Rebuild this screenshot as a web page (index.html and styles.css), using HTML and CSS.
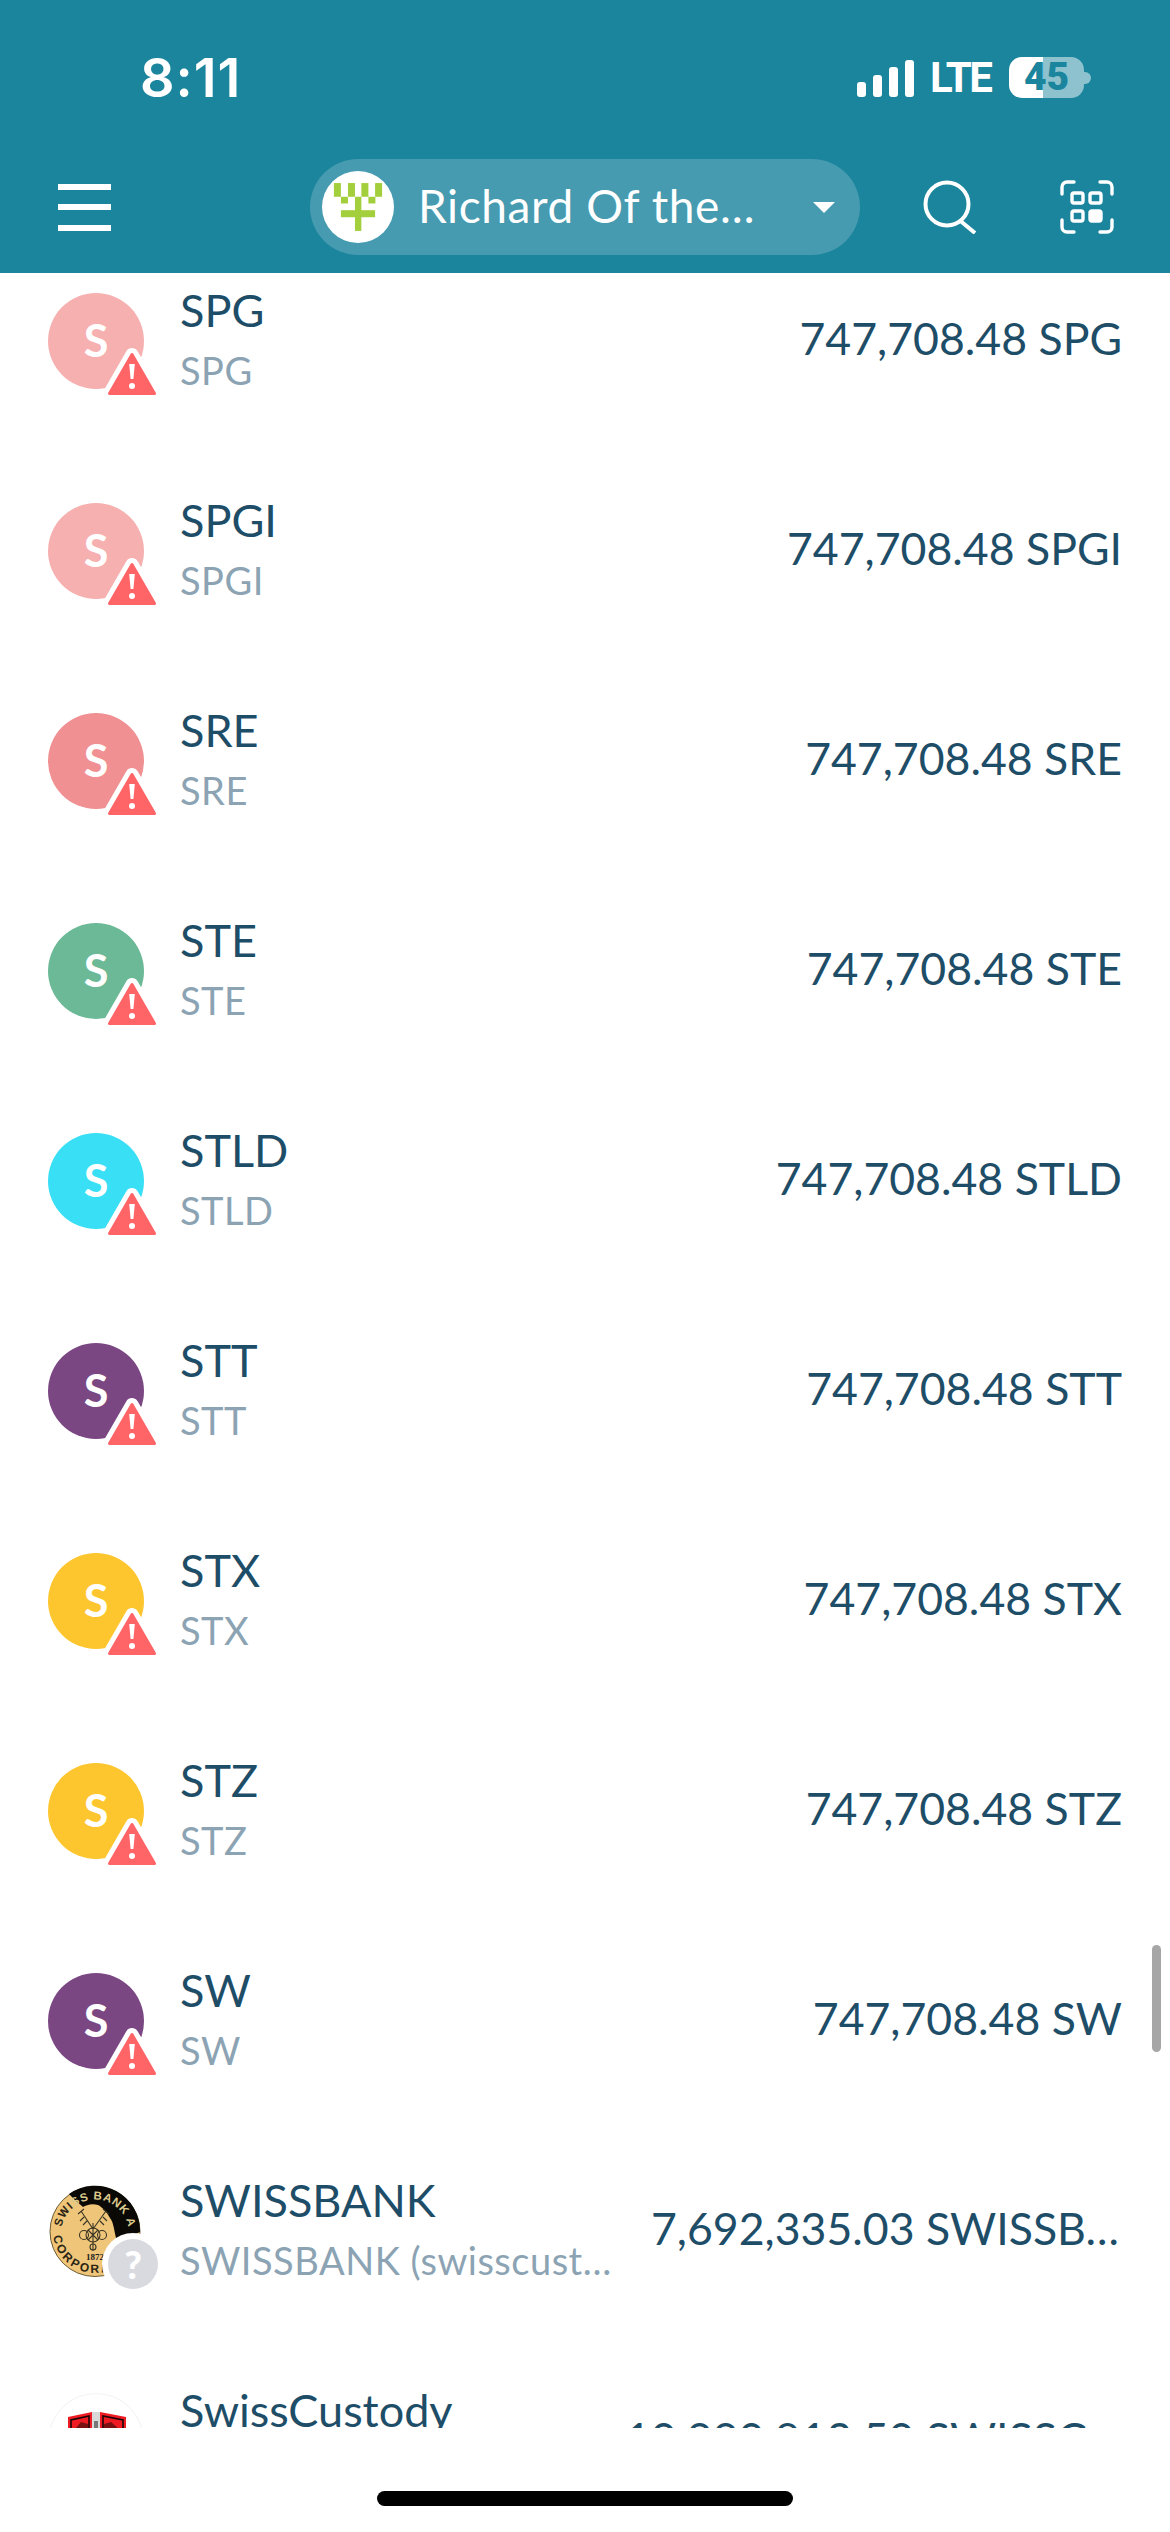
FILE: index.html
```html
<!DOCTYPE html>
<html lang="en">
<head>
<meta charset="utf-8">
<title>Tokens</title>
<link rel="stylesheet" href="styles.css">
</head>
<body>
<div class="app">
  <header class="header">
    <div class="status">
      <span class="time">8:11</span>
      <div class="status-right">
        <div class="signal"><i class="b1"></i><i class="b2"></i><i class="b3"></i><i class="b4"></i></div>
        <span class="lte">LTE</span>
        <div class="battery"><span class="batt-num">45</span></div>
        <span class="batt-tip"></span>
      </div>
    </div>
    <nav class="nav">
      <div class="burger"><i></i><i></i><i></i></div>
      <div class="pill">
        <div class="pill-logo">
          <svg viewBox="37 33 214 215" width="72" height="72"><g fill="#a4cf3d"><rect x="72" y="69" width="21" height="41"/><rect x="114" y="69" width="21" height="41"/><rect x="154" y="69" width="21" height="41"/><rect x="195" y="69" width="21" height="41"/><rect x="93" y="110" width="21" height="20"/><rect x="175" y="110" width="21" height="20"/><rect x="135" y="110" width="19" height="102"/><rect x="93" y="150" width="102" height="21"/></g></svg>
        </div>
        <span class="pill-text">Richard Of the…</span>
        <svg class="caret" viewBox="0 0 22 11" width="22" height="11"><path d="M0 0H22L11 11Z" fill="#fff"/></svg>
      </div>
      <svg class="search" viewBox="0 0 54 54" width="54" height="54" fill="none" stroke="#fff" stroke-width="4"><circle cx="24" cy="24" r="21.5"/><path d="M37.5 41L52 53"/></svg>
      <svg class="scan" viewBox="0 0 54 54" width="54" height="54" fill="none" stroke="#fff" stroke-width="3.4" stroke-linecap="round"><path d="M2 14V7A5 5 0 0 1 7 2H14M40 2H47A5 5 0 0 1 52 7V14M2 40V47A5 5 0 0 0 7 52H14M40 52H47A5 5 0 0 0 52 47V40"/><rect x="12" y="13" width="11" height="10" rx="2"/><rect x="30" y="13" width="11" height="10" rx="2"/><rect x="12" y="31" width="11" height="10" rx="2"/><rect x="30" y="31" width="11" height="10" rx="2" fill="#fff"/></svg>
    </nav>
  </header>

  <main class="list">
    <div class="list-inner">
      <div class="row"><div class="avatar c-pink">S<svg class="warn" viewBox="0 0 60 56" width="60" height="56"><use href="#warn-icon"/></svg></div><div class="names"><div class="name">SPG</div><div class="sub">SPG</div></div><div class="amount">747,708.48 SPG</div></div>
      <div class="row"><div class="avatar c-pink">S<svg class="warn" viewBox="0 0 60 56" width="60" height="56"><use href="#warn-icon"/></svg></div><div class="names"><div class="name">SPGI</div><div class="sub">SPGI</div></div><div class="amount">747,708.48 SPGI</div></div>
      <div class="row"><div class="avatar c-rose">S<svg class="warn" viewBox="0 0 60 56" width="60" height="56"><use href="#warn-icon"/></svg></div><div class="names"><div class="name">SRE</div><div class="sub">SRE</div></div><div class="amount">747,708.48 SRE</div></div>
      <div class="row"><div class="avatar c-green">S<svg class="warn" viewBox="0 0 60 56" width="60" height="56"><use href="#warn-icon"/></svg></div><div class="names"><div class="name">STE</div><div class="sub">STE</div></div><div class="amount">747,708.48 STE</div></div>
      <div class="row"><div class="avatar c-cyan">S<svg class="warn" viewBox="0 0 60 56" width="60" height="56"><use href="#warn-icon"/></svg></div><div class="names"><div class="name">STLD</div><div class="sub">STLD</div></div><div class="amount">747,708.48 STLD</div></div>
      <div class="row"><div class="avatar c-purple">S<svg class="warn" viewBox="0 0 60 56" width="60" height="56"><use href="#warn-icon"/></svg></div><div class="names"><div class="name">STT</div><div class="sub">STT</div></div><div class="amount">747,708.48 STT</div></div>
      <div class="row"><div class="avatar c-yellow">S<svg class="warn" viewBox="0 0 60 56" width="60" height="56"><use href="#warn-icon"/></svg></div><div class="names"><div class="name">STX</div><div class="sub">STX</div></div><div class="amount">747,708.48 STX</div></div>
      <div class="row"><div class="avatar c-yellow">S<svg class="warn" viewBox="0 0 60 56" width="60" height="56"><use href="#warn-icon"/></svg></div><div class="names"><div class="name">STZ</div><div class="sub">STZ</div></div><div class="amount">747,708.48 STZ</div></div>
      <div class="row"><div class="avatar c-purple">S<svg class="warn" viewBox="0 0 60 56" width="60" height="56"><use href="#warn-icon"/></svg></div><div class="names"><div class="name">SW</div><div class="sub">SW</div></div><div class="amount">747,708.48 SW</div></div>

      <div class="row">
        <div class="avatar">
          <svg class="seal" viewBox="0 0 96 96" width="96" height="96">
            <defs>
              <path id="arc-top" d="M15 62A34 34 0 1 1 79 62"/>
              <path id="arc-bot" d="M5 48A42 42 0 0 0 89 48"/>
            </defs>
            <circle cx="47" cy="48.5" r="45" fill="#efc679" stroke="#6b5a32" stroke-width="1"/>
            <path d="M21 11A45 45 0 0 1 92 49L69 59C66 48 66 40 62 35C58 28 54 24 50 22C44 20 38 22 35 24L27 17Z" fill="#0b0905"/>
            <text class="seal-text top"><textPath href="#arc-top" startOffset="14%"><tspan class="seal-dark">SWI</tspan>SS BANK A</textPath></text>
            <text class="seal-text bot"><textPath href="#arc-bot" startOffset="4%">CORPORATION</textPath></text>
            <g fill="none" stroke="#3a3524" stroke-width="1.1"><circle cx="45" cy="52" r="7"/><circle cx="36" cy="52" r="4.5"/><circle cx="54" cy="52" r="4.5"/><circle cx="45" cy="64" r="3"/><path d="M33 28L45 46M58 28L45 46M45 40V68M30 31L36 26M61 31L55 26M36 34L32 38M55 34L59 38M39 38L35 42M52 38L56 42M40 57L50 47M40 47L50 57"/></g>
            <text class="seal-year" x="47" y="77">1872</text>
          </svg>
          <svg class="unknown" viewBox="0 0 62 62" width="62" height="62"><circle cx="31" cy="31" r="31" fill="#fff"/><circle cx="31" cy="31" r="25" fill="#d9dae0"/></svg>
          <span class="unknown-mark">?</span>
        </div>
        <div class="names"><div class="name">SWISSBANK</div><div class="sub">SWISSBANK (swisscustody.ch)</div></div>
        <div class="amount">7,692,335.03 SWISSBANK</div>
      </div>

      <div class="row">
        <div class="avatar">
          <svg class="shield" viewBox="0 0 96 96" width="96" height="96">
            <circle cx="48" cy="48" r="47.5" fill="#fff" stroke="#f2f2f2"/>
            <path d="M20 24L44 19V84C30 80 20 66 20 50Z" fill="#ee1c22"/>
            <path d="M78 24L52 19V84C66 80 78 66 78 50Z" fill="#ee1c22"/>
            <rect x="44" y="19" width="8" height="70" fill="#d9d9d9"/>
            <path d="M23 50V27L41 23V70M75 50V27L55 23V70" fill="none" stroke="#1a0506" stroke-width="1.6"/>
            <path d="M27 36L33 29L40 31V50H27ZM56 31L63 29L71 36V50H56Z" fill="#7a1012"/>
            <path d="M46 28H50V40H46Z" fill="#777"/>
          </svg>
        </div>
        <div class="names names-short"><div class="name">SwissCustody</div><div class="sub">SwissCustody</div></div>
        <div class="amount">10,990,813.50 SWISSCUSTODY</div>
      </div>
    </div>
    <div class="scrollbar"></div>
  </main>

  <footer class="home"><span class="home-bar"></span></footer>
</div>

<svg class="defs" width="0" height="0">
  <symbol id="warn-icon" viewBox="0 0 60 56">
    <path d="M30 9.5L7.5 48.5H52.5Z" fill="#fff" stroke="#fff" stroke-width="13" stroke-linejoin="round"/>
    <path d="M30 9.5L7.5 48.5H52.5Z" fill="#ff6467" stroke="#ff6467" stroke-width="3" stroke-linejoin="round"/>
    <path d="M27.2 19H32.8L31.4 34H28.6Z" fill="#fff"/>
    <circle cx="30" cy="41" r="3" fill="#fff"/>
  </symbol>
</svg>
</body>
</html>
```

FILE: styles.css
```css
* { box-sizing: border-box; }
html, body { margin: 0; padding: 0; background: #fff; }
.app {
  width: 1170px;
  height: 2532px;
  display: flex;
  flex-direction: column;
  overflow: hidden;
  font-family: "Lato", "Noto Sans", sans-serif;
}

/* Header */
.header {
  height: 273px;
  flex: none;
  background: #1a859c;
  padding-top: 57px;
  color: #fff;
}
.status {
  height: 41px;
  display: flex;
  align-items: center;
  justify-content: space-between;
  padding: 0 79px 0 140px;
}
.time {
  font-family: "Inter", sans-serif;
  font-weight: 600;
  font-size: 54px;
  line-height: 41px;
  letter-spacing: 1px;
}
.status-right { display: flex; align-items: center; height: 41px; }
.signal { display: flex; align-items: flex-end; gap: 6.5px; height: 37px; margin-top: 1px; }
.signal i { display: block; width: 9.5px; background: #fff; border-radius: 3px; }
.signal .b1 { height: 15px; }
.signal .b2 { height: 22px; }
.signal .b3 { height: 30px; }
.signal .b4 { height: 37px; }
.lte {
  font-family: "Roboto", sans-serif;
  font-weight: 700;
  font-size: 42px;
  line-height: 41px;
  margin-left: 16px;
  width: 63px;
  display: block;
  letter-spacing: -2.4px;
  margin-right: 16px;
}
.battery {
  width: 75px;
  height: 41px;
  border-radius: 13px;
  background: linear-gradient(90deg, #fff 0 34px, rgba(255,255,255,.5) 34px);
  display: flex;
  align-items: center;
  justify-content: center;
}
.batt-num {
  font-family: "Roboto", sans-serif;
  font-weight: 900;
  font-size: 39px;
  line-height: 41px;
  color: #1a859c;
}
.batt-tip {
  width: 7px;
  height: 12px;
  background: rgba(255,255,255,.5);
  border-radius: 0 6px 6px 0;
}

.nav {
  margin-top: 61px;
  height: 96px;
  display: flex;
  align-items: center;
  padding-left: 58px;
}
.burger { width: 53px; display: flex; flex-direction: column; gap: 14.5px; }
.burger i { display: block; height: 6px; background: #fff; }
.pill {
  width: 550px;
  height: 96px;
  margin-left: 199px;
  border-radius: 48px;
  background: #469bb0;
  display: flex;
  align-items: center;
  padding-left: 12px;
}
.pill-logo {
  width: 72px;
  height: 72px;
  flex: none;
  border-radius: 50%;
  background: #fff;
  display: flex;
}
.pill-text {
  width: 345px;
  margin-left: 24px;
  margin-top: -4px;
  font-size: 46px;
  font-weight: 400;
  letter-spacing: .6px;
  white-space: nowrap;
  flex: none;
}
.caret { margin-left: 50px; flex: none; }
.search { margin-left: 63px; flex: none; }
.scan { margin-left: 83px; flex: none; }

/* List */
.list {
  height: 2155px;
  flex: none;
  overflow: hidden;
  position: relative;
}
.list-inner { margin-top: -37px; }
.row {
  height: 210px;
  display: flex;
  align-items: center;
  padding: 0 48px 0 48px;
}
.avatar {
  width: 96px;
  height: 96px;
  flex: none;
  border-radius: 50%;
  position: relative;
  color: #fff;
  font-size: 45px;
  font-weight: 700;
  line-height: 94px;
  text-align: center;
}
.c-pink { background: #f6b0b0; }
.c-rose { background: #f09092; }
.c-green { background: #6cb998; }
.c-cyan { background: #38dff5; }
.c-purple { background: #7b4783; }
.c-yellow { background: #fec62e; }
.warn { position: absolute; left: 54px; top: 52px; }
.defs { position: absolute; }
.seal { display: block; }
.seal-text { font-family: "Liberation Sans", sans-serif; font-size: 11.5px; fill: #2b2414; }
.seal-text.top { fill: #dcc98c; letter-spacing: .8px; }
.seal-dark { fill: #2b2414; }
.seal-text.bot { font-size: 12px; letter-spacing: 2.4px; }
.seal-year { font-family: "Liberation Serif", serif; font-size: 9px; font-weight: 700; text-anchor: middle; fill: #222; }
.shield { display: block; }
.unknown { position: absolute; left: 54px; top: 50px; }
.unknown-mark {
  position: absolute;
  left: 54px;
  top: 50px;
  width: 62px;
  height: 62px;
  line-height: 62px;
  font-size: 38px;
  font-weight: 900;
  color: #fff;
  text-align: center;
}
.names {
  width: 446px;
  flex: none;
  margin-left: 36px;
  padding-bottom: 3px;
}
.names-short { width: 420px; }
.name, .sub {
  white-space: nowrap;
  overflow: hidden;
  text-overflow: ellipsis;
}
.name { color: #1e4d68; font-size: 45px; line-height: 60px; }
.sub { color: #8ba3b3; font-size: 38px; line-height: 60px; letter-spacing: .5px; }
.amount {
  flex: 1;
  min-width: 0;
  margin-left: 25px;
  padding-bottom: 8px;
  text-align: right;
  color: #1e4d68;
  font-size: 44.6px;
  white-space: nowrap;
  overflow: hidden;
  text-overflow: ellipsis;
}
.scrollbar {
  position: absolute;
  left: 1152px;
  top: 1672px;
  width: 9px;
  height: 107px;
  border-radius: 5px;
  background: #a6a6a6;
}

/* Home indicator */
.home { flex: 1; display: flex; justify-content: center; padding-top: 63px; }
.home-bar { width: 416px; height: 15px; border-radius: 8px; background: #000; }
```
